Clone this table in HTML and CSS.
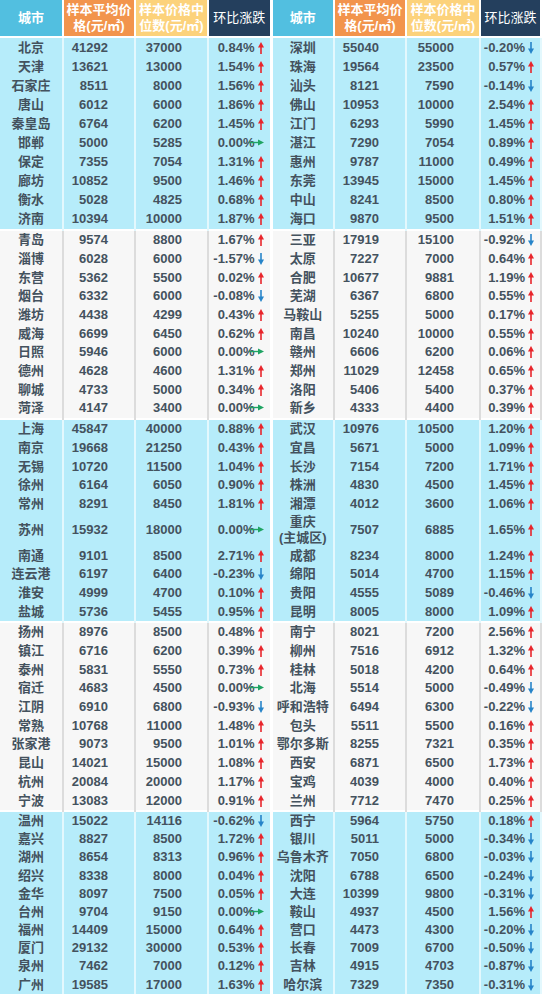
FILE: index.html
```html
<!DOCTYPE html>
<html lang="zh">
<head>
<meta charset="utf-8">
<title>城市房价</title>
<link rel="stylesheet" href="styles.css">
</head>
<body>
<table class="tbl">
<colgroup>
<col class="c1"><col class="c2"><col class="c3"><col class="c4">
<col class="c5"><col class="c6"><col class="c7"><col class="c8">
</colgroup>
<thead>
<tr>
<th class="h-city">城市</th><th class="h-avg">样本平均价<br>格(元/㎡)</th><th class="h-med">样本价格中<br>位数(元/㎡)</th><th class="h-chg">环比涨跌</th>
<th class="h-city">城市</th><th class="h-avg">样本平均价<br>格(元/㎡)</th><th class="h-med">样本价格中<br>位数(元/㎡)</th><th class="h-chg">环比涨跌</th>
</tr>
</thead>
<tbody id="body"></tbody>
</table>
<script src="app.js"></script>
</body>
</html>
```
FILE: styles.css
```css
html, body {
  margin: 0;
  padding: 0;
  background: #ffffff;
}
body {
  width: 546px;
  font-family: "Liberation Sans", "Noto Sans CJK SC", sans-serif;
}
.tbl {
  border-collapse: collapse;
  table-layout: fixed;
  width: 541px;
  font-size: 13px;
  font-weight: bold;
  color: #44525e;
}
.c1 { width: 63px; }
.c2 { width: 72px; }
.c3 { width: 73px; }
.c4 { width: 63px; }
.c5 { width: 63px; }
.c6 { width: 72px; }
.c7 { width: 74px; }
.c8 { width: 61px; }

th {
  height: 36px;
  padding: 0;
  color: #ffffff;
  font-size: 13px;
  font-weight: bold;
  line-height: 16px;
  text-align: center;
  border-right: 2px solid #ffffff;
  border-bottom: 2px solid #ffffff;
}
th:nth-child(4) { border-right-width: 3px; }
.h-city { background: #52bfe0; }
.h-avg { background: #f2944c; }
.h-med { background: #fcd27b; }
.h-chg { background: #243f5d; font-weight: normal; }

td {
  height: 18.7px;
  padding: 0;
  line-height: 14px;
  white-space: nowrap;
  border-right: 2px solid #e3f8fd;
  vertical-align: middle;
}
td:nth-child(4) { border-right: 3px solid #ffffff; }
.grp-a td { background: #b6ecfa; }
.grp-b td { background: #f7f7f7; border-right-color: #dcdcdc; }
.grp-b td:nth-child(4) { border-right-color: #ffffff; }
.first td { border-top: 2px solid #ffffff; }
.g0 td { height: 19.1px; }
.g4 td { height: 18.2px; }
.tall td { height: 33px; }

.city { text-align: center; }
.num { text-align: right; }
td:nth-child(2), td:nth-child(6) { padding-right: 26px; }
td:nth-child(3), td:nth-child(7) { padding-right: 25px; }
.chg { text-align: right; padding-right: 6px; }
.city2 { line-height: 16px; }

.arr {
  display: inline-block;
  width: 9px;
  text-align: right;
  vertical-align: -2px;
}
.arr svg { display: block; margin-left: auto; }
.arr.flat { width: 15px; margin-left: -6px; vertical-align: 1px; }
```
FILE: app.js
```js
var data = [
 [["北京",41292,37000,"0.84%"],["深圳",55040,55000,"-0.20%"]],
 [["天津",13621,13000,"1.54%"],["珠海",19564,23500,"0.57%"]],
 [["石家庄",8511,8000,"1.56%"],["汕头",8121,7590,"-0.14%"]],
 [["唐山",6012,6000,"1.86%"],["佛山",10953,10000,"2.54%"]],
 [["秦皇岛",6764,6200,"1.45%"],["江门",6293,5990,"1.45%"]],
 [["邯郸",5000,5285,"0.00%"],["湛江",7290,7054,"0.89%"]],
 [["保定",7355,7054,"1.31%"],["惠州",9787,11000,"0.49%"]],
 [["廊坊",10852,9500,"1.46%"],["东莞",13945,15000,"1.45%"]],
 [["衡水",5028,4825,"0.68%"],["中山",8241,8500,"0.80%"]],
 [["济南",10394,10000,"1.87%"],["海口",9870,9500,"1.51%"]],
 [["青岛",9574,8800,"1.67%"],["三亚",17919,15100,"-0.92%"]],
 [["淄博",6028,6000,"-1.57%"],["太原",7227,7000,"0.64%"]],
 [["东营",5362,5500,"0.02%"],["合肥",10677,9881,"1.19%"]],
 [["烟台",6332,6000,"-0.08%"],["芜湖",6367,6800,"0.55%"]],
 [["潍坊",4438,4299,"0.43%"],["马鞍山",5255,5000,"0.17%"]],
 [["威海",6699,6450,"0.62%"],["南昌",10240,10000,"0.55%"]],
 [["日照",5946,6000,"0.00%"],["赣州",6606,6200,"0.06%"]],
 [["德州",4628,4600,"1.31%"],["郑州",11029,12458,"0.65%"]],
 [["聊城",4733,5000,"0.34%"],["洛阳",5406,5400,"0.37%"]],
 [["菏泽",4147,3400,"0.00%"],["新乡",4333,4400,"0.39%"]],
 [["上海",45847,40000,"0.88%"],["武汉",10976,10500,"1.20%"]],
 [["南京",19668,21250,"0.43%"],["宜昌",5671,5000,"1.09%"]],
 [["无锡",10720,11500,"1.04%"],["长沙",7154,7200,"1.71%"]],
 [["徐州",6164,6050,"0.90%"],["株洲",4830,4500,"1.45%"]],
 [["常州",8291,8450,"1.81%"],["湘潭",4012,3600,"1.06%"]],
 [["苏州",15932,18000,"0.00%"],["重庆<br>(主城区)",7507,6885,"1.65%"]],
 [["南通",9101,8500,"2.71%"],["成都",8234,8000,"1.24%"]],
 [["连云港",6197,6400,"-0.23%"],["绵阳",5014,4700,"1.15%"]],
 [["淮安",4999,4700,"0.10%"],["贵阳",4555,5089,"-0.46%"]],
 [["盐城",5736,5455,"0.95%"],["昆明",8005,8000,"1.09%"]],
 [["扬州",8976,8500,"0.48%"],["南宁",8021,7200,"2.56%"]],
 [["镇江",6716,6200,"0.39%"],["柳州",7516,6912,"1.32%"]],
 [["泰州",5831,5550,"0.73%"],["桂林",5018,4200,"0.64%"]],
 [["宿迁",4683,4500,"0.00%"],["北海",5514,5000,"-0.49%"]],
 [["江阴",6910,6800,"-0.93%"],["呼和浩特",6494,6300,"-0.22%"]],
 [["常熟",10768,11000,"1.48%"],["包头",5511,5500,"0.16%"]],
 [["张家港",9073,9500,"1.01%"],["鄂尔多斯",8255,7321,"0.35%"]],
 [["昆山",14021,15000,"1.08%"],["西安",6871,6500,"1.73%"]],
 [["杭州",20084,20000,"1.17%"],["宝鸡",4039,4000,"0.40%"]],
 [["宁波",13083,12000,"0.91%"],["兰州",7712,7470,"0.25%"]],
 [["温州",15022,14116,"-0.62%"],["西宁",5964,5750,"0.18%"]],
 [["嘉兴",8827,8500,"1.72%"],["银川",5011,5000,"-0.34%"]],
 [["湖州",8654,8313,"0.96%"],["乌鲁木齐",7050,6800,"-0.03%"]],
 [["绍兴",8338,8000,"0.04%"],["沈阳",6788,6500,"-0.24%"]],
 [["金华",8097,7500,"0.05%"],["大连",10399,9800,"-0.31%"]],
 [["台州",9704,9150,"0.00%"],["鞍山",4937,4500,"1.56%"]],
 [["福州",14409,15000,"0.64%"],["营口",4473,4300,"-0.20%"]],
 [["厦门",29132,30000,"0.53%"],["长春",7009,6700,"-0.50%"]],
 [["泉州",7462,7000,"0.12%"],["吉林",4915,4703,"-0.87%"]],
 [["广州",19585,17000,"1.63%"],["哈尔滨",7329,7350,"-0.31%"]]
];

var UP = '<svg width="6" height="12" viewBox="0 0 6 12"><path d="M3 4.5V12" stroke="#e8252b" stroke-width="1.6"/><path d="M0 5.5L3 0L6 5.5Z" fill="#e8252b"/></svg>';
var DOWN = '<svg width="6" height="12" viewBox="0 0 6 12"><path d="M3 0V7.5" stroke="#2684c9" stroke-width="1.6"/><path d="M0 6.5L3 12L6 6.5Z" fill="#2684c9"/></svg>';
var FLAT = '<svg width="15" height="7" viewBox="0 0 15 7"><path d="M0 3.5H10" stroke="#1fa463" stroke-width="1.4"/><path d="M9 0.5L15 3.5L9 6.5Z" fill="#1fa463"/></svg>';

function arrow(v) {
  if (v === "0.00%") return '<span class="arr flat">' + FLAT + '</span>';
  if (v.charAt(0) === "-") return '<span class="arr">' + DOWN + '</span>';
  return '<span class="arr">' + UP + '</span>';
}

function cells(r) {
  var c = r[0].indexOf("<br>") >= 0 ? "city city2" : "city";
  return '<td class="' + c + '">' + r[0] + '</td>' +
    '<td class="num">' + r[1] + '</td>' +
    '<td class="num">' + r[2] + '</td>' +
    '<td class="chg">' + r[3] + arrow(r[3]) + '</td>';
}

var html = "";
for (var i = 0; i < data.length; i++) {
  var g = Math.floor(i / 10);
  var cls = ((g % 2 === 0) ? "grp-a" : "grp-b") + " g" + g;
  if (i % 10 === 0 && i > 0) cls += " first";
  if (i === 25) cls += " tall";
  html += '<tr class="' + cls + '">' + cells(data[i][0]) + cells(data[i][1]) + '</tr>';
}
document.getElementById("body").innerHTML = html;
```
